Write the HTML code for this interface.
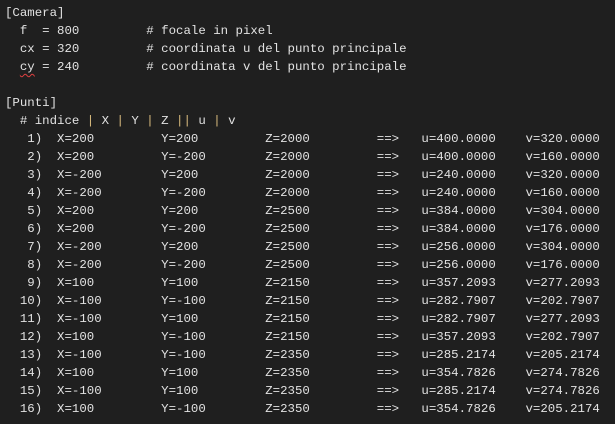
<!DOCTYPE html><html><head><style>
html,body{margin:0;padding:0;background:#1f1f1f;width:615px;height:424px;overflow:hidden}
pre{margin:0;position:absolute;left:5px;top:4px;font-family:"Liberation Mono",monospace;font-size:12.4px;line-height:18px;color:#e2e2e2}
.p{color:#d7ba7d}
.sq{text-decoration:underline wavy #e04040;text-decoration-thickness:1px;text-underline-offset:3px}
</style></head><body><pre>[Camera]
  f  = 800         # focale in pixel
  cx = 320         # coordinata u del punto principale
  <span class="sq">cy</span> = 240         # coordinata v del punto principale

[Punti]
  # indice <span class="p">|</span> X <span class="p">|</span> Y <span class="p">|</span> Z <span class="p">||</span> u <span class="p">|</span> v
   1)  X=200         Y=200         Z=2000         ==>   u=400.0000    v=320.0000
   2)  X=200         Y=-200        Z=2000         ==>   u=400.0000    v=160.0000
   3)  X=-200        Y=200         Z=2000         ==>   u=240.0000    v=320.0000
   4)  X=-200        Y=-200        Z=2000         ==>   u=240.0000    v=160.0000
   5)  X=200         Y=200         Z=2500         ==>   u=384.0000    v=304.0000
   6)  X=200         Y=-200        Z=2500         ==>   u=384.0000    v=176.0000
   7)  X=-200        Y=200         Z=2500         ==>   u=256.0000    v=304.0000
   8)  X=-200        Y=-200        Z=2500         ==>   u=256.0000    v=176.0000
   9)  X=100         Y=100         Z=2150         ==>   u=357.2093    v=277.2093
  10)  X=-100        Y=-100        Z=2150         ==>   u=282.7907    v=202.7907
  11)  X=-100        Y=100         Z=2150         ==>   u=282.7907    v=277.2093
  12)  X=100         Y=-100        Z=2150         ==>   u=357.2093    v=202.7907
  13)  X=-100        Y=-100        Z=2350         ==>   u=285.2174    v=205.2174
  14)  X=100         Y=100         Z=2350         ==>   u=354.7826    v=274.7826
  15)  X=-100        Y=100         Z=2350         ==>   u=285.2174    v=274.7826
  16)  X=100         Y=-100        Z=2350         ==>   u=354.7826    v=205.2174
</pre></body></html>
